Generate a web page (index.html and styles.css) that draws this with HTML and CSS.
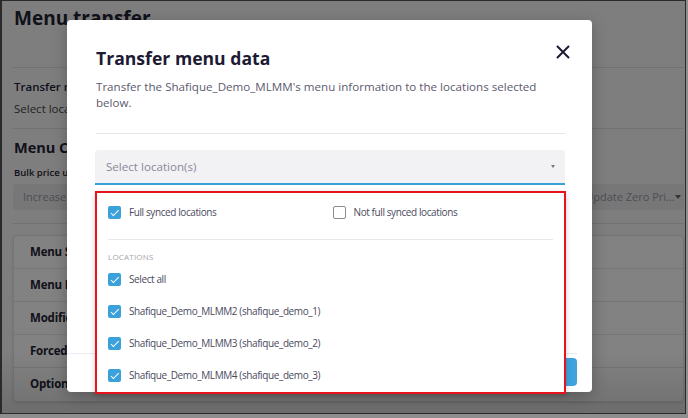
FILE: index.html
```html
<!DOCTYPE html>
<html>
<head>
<meta charset="utf-8">
<link rel="stylesheet" href="styles.css">
</head>
<body>
<div class="frame">
  <div class="page">
    <h1 class="page-title">Menu transfer</h1>
    <div class="rule rule-1"></div>
    <div class="sec-label">Transfer menu data</div>
    <div class="sec-text">Select locations to transfer the menu to</div>
    <div class="rule rule-2"></div>
    <h2 class="page-sub">Menu Changes</h2>
    <div class="field-label">Bulk price update</div>
    <div class="filters">
      <div class="fselect">Increase</div>
      <div class="fselect">Percentage</div>
      <div class="fselect">Amount</div>
      <div class="fselect">All items</div>
      <div class="fselect">Round</div>
      <div class="fselect">Update Zero Pri...<span class="fcaret"></span></div>
    </div>
    <div class="rule rule-3"></div>
    <div class="card">
      <div class="card-row">Menu Sections</div>
      <div class="card-row">Menu Items</div>
      <div class="card-row">Modifier Groups</div>
      <div class="card-row">Forced Modifiers</div>
      <div class="card-row">Optional Modifiers</div>
    </div>
  </div>
  <div class="overlay"></div>
  <div class="modal">
    <div class="modal-head">
      <h2 class="modal-title">Transfer menu data</h2>
      <svg class="close" width="14" height="14" viewBox="0 0 14 14"><path d="M1.5 1.5L12.5 12.5M12.5 1.5L1.5 12.5" stroke="#1d1a33" stroke-width="2" stroke-linecap="round"/></svg>
    </div>
    <p class="modal-desc">Transfer the Shafique_Demo_MLMM's menu information to the locations selected below.</p>
    <div class="modal-rule"></div>
    <div class="select">
      <span class="select-ph">Select location(s)</span>
      <span class="select-caret"></span>
    </div>
    <div class="modal-foot">
      <button class="btn">Transfer</button>
    </div>
    <div class="dropdown">
      <div class="sync-row">
        <label class="opt"><span class="cb on"></span>Full synced locations</label>
        <label class="opt"><span class="cb"></span>Not full synced locations</label>
      </div>
      <div class="dd-rule"></div>
      <div class="dd-label">LOCATIONS</div>
      <label class="opt row"><span class="cb on"></span>Select all</label>
      <label class="opt row"><span class="cb on"></span>Shafique_Demo_MLMM2 (shafique_demo_1)</label>
      <label class="opt row"><span class="cb on"></span>Shafique_Demo_MLMM3 (shafique_demo_2)</label>
      <label class="opt row"><span class="cb on"></span>Shafique_Demo_MLMM4 (shafique_demo_3)</label>
    </div>
  </div>
</div>
</body>
</html>
```

FILE: styles.css
```css
* { box-sizing: border-box; }
html, body { margin: 0; padding: 0; }
body {
  font-family: "Open Sans", "Liberation Sans", sans-serif;
  background: #8e8e8e;
  width: 688px;
  height: 418px;
  overflow: hidden;
}

.frame {
  position: relative;
  width: 686px;
  height: 414px;
  border: 1px solid #2a2a2a;
  border-left-width: 2px;
  overflow: hidden;
  background: #f7f7f8;
}

.page {
  padding: 5px 1px 0 11px;
  color: #222233;
}
.page-title {
  margin: 0 0 0 1px;
  height: 24px;
  line-height: 24px;
  font-size: 19px;
  font-weight: 700;
}
.rule { border-top: 1px solid #dedede; }
.rule-1 { margin-top: 37px; }
.sec-label { margin: 10px 0 0 1px; line-height: 18px; font-size: 11.5px; font-weight: 600; }
.sec-text { margin: 4px 0 0 1px; line-height: 18px; font-size: 11.5px; color: #444; }
.rule-2 { margin-top: 10px; }
.page-sub { margin: 9px 0 0 1px; line-height: 20px; font-size: 14.5px; font-weight: 700; }
.field-label { margin: 8px 0 0 1px; line-height: 14px; font-size: 9.5px; font-weight: 600; }
.filters {
  margin-top: 4px;
  display: grid;
  grid-template-columns: repeat(6, 1fr);
  gap: 6px;
}
.fselect {
  position: relative;
  height: 26px;
  line-height: 26px;
  padding: 0 10px;
  background: #e9e9ec;
  border-radius: 3px;
  font-size: 11px;
  color: #9a9aa2;
  white-space: nowrap;
  overflow: hidden;
}
.fselect:last-child { padding-left: 8px; }
.fcaret {
  position: absolute;
  right: 3px;
  top: 11px;
  border-left: 3px solid transparent;
  border-right: 3px solid transparent;
  border-top: 4px solid #666;
}
.rule-3 { margin-top: 13px; }
.card {
  margin-top: 11px;
  background: #fff;
  border: 1px solid #e4e4e4;
  border-radius: 4px;
  box-shadow: 0 1px 3px rgba(0,0,0,0.12);
}
.card-row {
  height: 33px;
  line-height: 32px;
  padding-left: 16px;
  border-bottom: 1px solid #e6e6e6;
  font-size: 11.5px;
  font-weight: 700;
  letter-spacing: -0.2px;
}
.card-row:last-child { border-bottom: 0; }

.overlay {
  position: absolute;
  inset: 0;
  background: linear-gradient(to bottom, rgba(0,0,0,0.49) 85%, rgba(0,0,0,0.56));
}

.modal {
  position: absolute;
  left: 65px;
  top: 19px;
  width: 525px;
  height: 372px;
  background: #fff;
  border-radius: 4px;
  box-shadow: 0 4px 16px rgba(0,0,0,0.25);
  display: flex;
  flex-direction: column;
  padding: 26px 27px 0 29px;
}
.modal-head {
  display: flex;
  justify-content: space-between;
  align-items: flex-start;
}
.modal-title {
  margin: 0;
  font-size: 17.6px;
  line-height: 24px;
  font-weight: 700;
  color: #1d1a33;
}
.close { margin-top: -1px; margin-right: -5px; }
.modal-desc {
  margin: 9px 0 0;
  font-size: 11.6px;
  line-height: 16px;
  color: #5d5a70;
}
.modal-rule { margin-top: 22px; border-top: 1px solid #e6e6ea; }
.select {
  margin-top: 16px;
  margin-left: -1px;
  height: 35px;
  background: #f2f2f5;
  border-bottom: 2px solid #3ba1da;
  border-radius: 3px 3px 0 0;
  display: flex;
  align-items: center;
  justify-content: space-between;
  padding: 0 10px 0 11px;
}
.select-ph { font-size: 11.6px; color: #8a8896; }
.select-caret {
  border-left: 2.5px solid transparent;
  border-right: 2.5px solid transparent;
  border-top: 3px solid #777;
}
.modal-foot {
  margin: auto -12px 0 -29px;
  border-top: 1px solid #ececef;
  padding: 4px 0 6px;
  display: flex;
  justify-content: flex-end;
}
.btn {
  height: 28px;
  padding: 0 14px;
  border: 0;
  border-radius: 4px;
  background: #3ea3dc;
  color: #fff;
  font-family: inherit;
  font-size: 12px;
  font-weight: 600;
}

.dropdown {
  position: absolute;
  left: 28px;
  top: 171px;
  width: 471px;
  height: 203px;
  background: #fff;
  border: 2px solid #e8121c;
  box-shadow: 0 2px 6px rgba(0,0,0,0.2);
  padding: 4px 11px 0 11px;
}
.sync-row {
  display: grid;
  grid-template-columns: 1fr 1fr;
  column-gap: 4px;
}
.opt {
  display: flex;
  align-items: center;
  height: 30px;
  font-size: 10px;
  letter-spacing: -0.4px;
  color: #4b4a5e;
}
.opt.row { height: 32px; }
.cb {
  width: 13px;
  height: 13px;
  border-radius: 2px;
  margin-right: 8px;
  border: 1.5px solid #8a8a94;
  background: #fff;
  flex: none;
  position: relative;
}
.cb.on {
  border: 0;
  background: #3ba1da;
}
.cb.on::after {
  content: "";
  position: absolute;
  left: 4.5px;
  top: 2px;
  width: 3px;
  height: 6.5px;
  border: solid #fff;
  border-width: 0 1.6px 1.6px 0;
  transform: rotate(45deg);
}
.dd-rule { margin-top: 12px; border-top: 1px solid #e8e8ec; }
.dd-label {
  margin-top: 11px;
  height: 12px;
  line-height: 12px;
  font-size: 8px;
  color: #a5a5ae;
  letter-spacing: 0.2px;
}
```
